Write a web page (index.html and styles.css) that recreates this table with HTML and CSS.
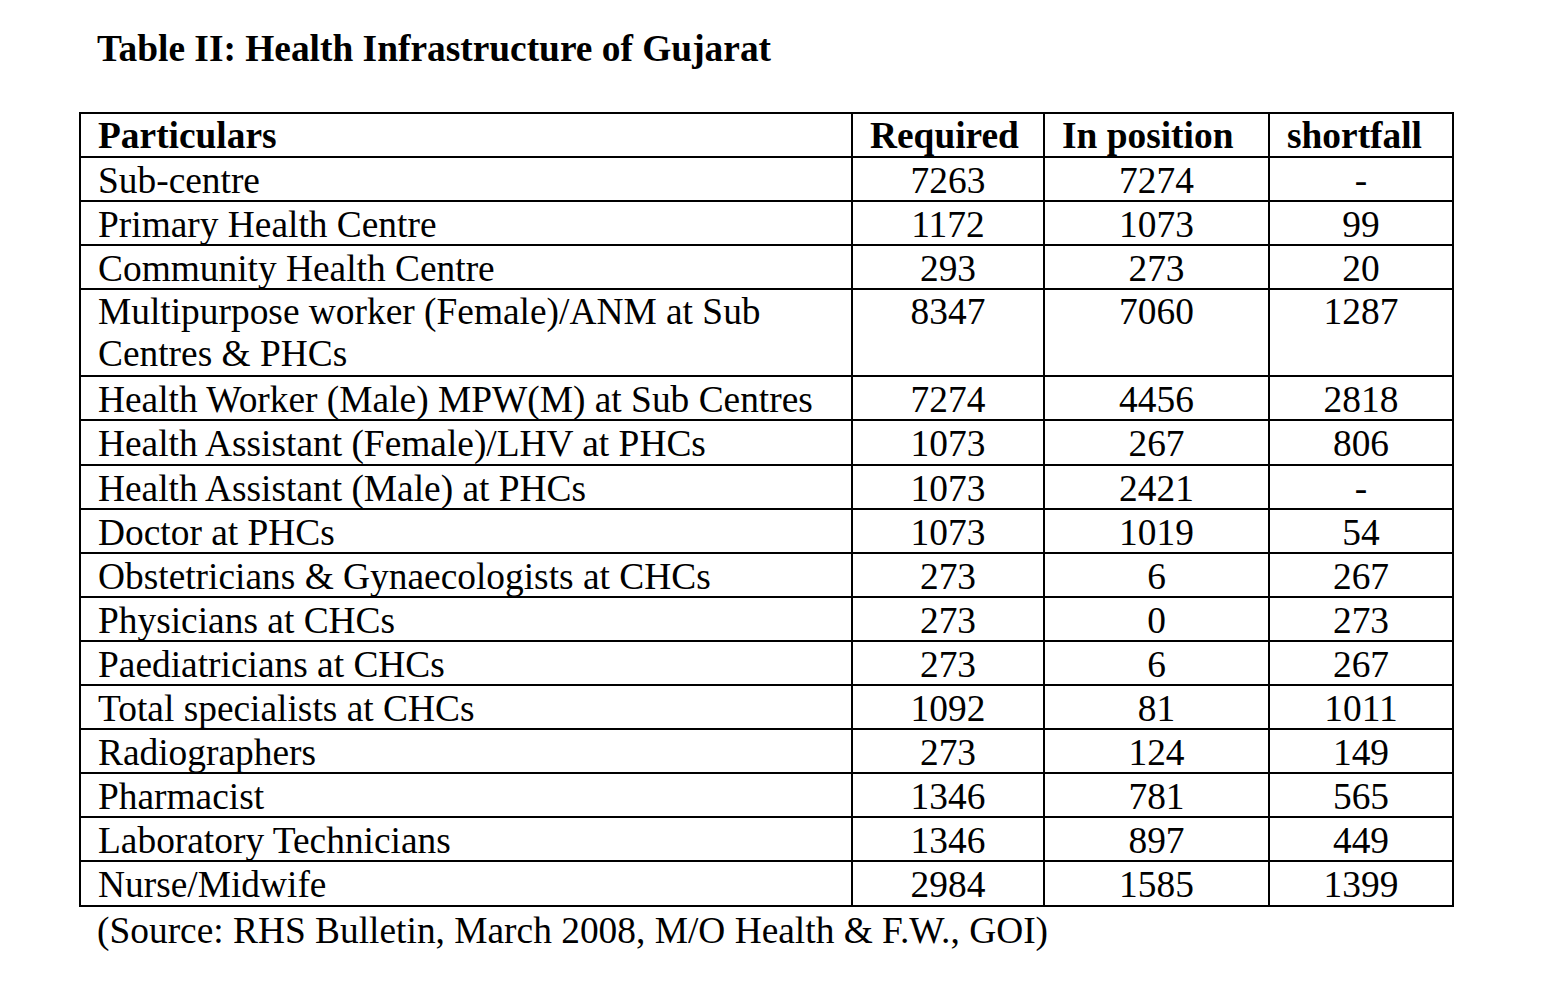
FILE: index.html
```html
<!DOCTYPE html>
<html>
<head>
<meta charset="utf-8">
<link rel="stylesheet" href="styles.css">
</head>
<body>
<div class="page">
  <h1 class="title">Table II: Health Infrastructure of Gujarat</h1>
  <table class="data">
    <colgroup>
      <col class="c1"><col class="c2"><col class="c3"><col class="c4">
    </colgroup>
    <thead>
      <tr><th>Particulars</th><th>Required</th><th>In position</th><th>shortfall</th></tr>
    </thead>
    <tbody>
      <tr><td>Sub-centre</td><td>7263</td><td>7274</td><td>-</td></tr>
      <tr><td>Primary Health Centre</td><td>1172</td><td>1073</td><td>99</td></tr>
      <tr><td>Community Health Centre</td><td>293</td><td>273</td><td>20</td></tr>
      <tr class="tall"><td>Multipurpose worker (Female)/ANM at Sub<br>Centres &amp; PHCs</td><td>8347</td><td>7060</td><td>1287</td></tr>
      <tr><td>Health Worker (Male) MPW(M) at Sub Centres</td><td>7274</td><td>4456</td><td>2818</td></tr>
      <tr><td>Health Assistant (Female)/LHV at PHCs</td><td>1073</td><td>267</td><td>806</td></tr>
      <tr><td>Health Assistant (Male) at PHCs</td><td>1073</td><td>2421</td><td>-</td></tr>
      <tr><td>Doctor at PHCs</td><td>1073</td><td>1019</td><td>54</td></tr>
      <tr><td>Obstetricians &amp; Gynaecologists at CHCs</td><td>273</td><td>6</td><td>267</td></tr>
      <tr><td>Physicians at CHCs</td><td>273</td><td>0</td><td>273</td></tr>
      <tr><td>Paediatricians at CHCs</td><td>273</td><td>6</td><td>267</td></tr>
      <tr><td>Total specialists at CHCs</td><td>1092</td><td>81</td><td>1011</td></tr>
      <tr><td>Radiographers</td><td>273</td><td>124</td><td>149</td></tr>
      <tr><td>Pharmacist</td><td>1346</td><td>781</td><td>565</td></tr>
      <tr><td>Laboratory Technicians</td><td>1346</td><td>897</td><td>449</td></tr>
      <tr><td>Nurse/Midwife</td><td>2984</td><td>1585</td><td>1399</td></tr>
    </tbody>
  </table>
  <p class="source">(Source: RHS Bulletin, March 2008, M/O Health &amp; F.W., GOI)</p>
</div>
</body>
</html>
```
FILE: styles.css
```css
html, body {
  margin: 0;
  padding: 0;
  background: #ffffff;
}
body {
  font-family: "Liberation Serif", "Times New Roman", serif;
  color: #000;
}
.page {
  padding: 30px 0 0 79px;
}
.title {
  margin: 0 0 44px 18px;
  font-size: 37.4px;
  font-weight: bold;
  line-height: 38px;
}
.data {
  border-collapse: collapse;
  width: 1373px;
  table-layout: fixed;
  font-size: 37.4px;
  line-height: 39px;
}
.c1 { width: 772px; }
.c2 { width: 192px; }
.c3 { width: 225px; }
.c4 { width: 184px; }
.data th, .data td {
  border: 2px solid #000;
  padding: 3px 0 0 17px;
  height: 39.1px;
  vertical-align: top;
}
.data th {
  padding-top: 2px;
  height: 40.1px;
  text-align: left;
  font-weight: bold;
}
.data tr.tall td {
  padding-top: 1px;
  height: 84px;
  line-height: 42px;
}
.data td + td {
  text-align: center;
  padding-left: 0;
}
.source {
  margin: 4px 0 0 18px;
  font-size: 37.4px;
  line-height: 40px;
}
```
